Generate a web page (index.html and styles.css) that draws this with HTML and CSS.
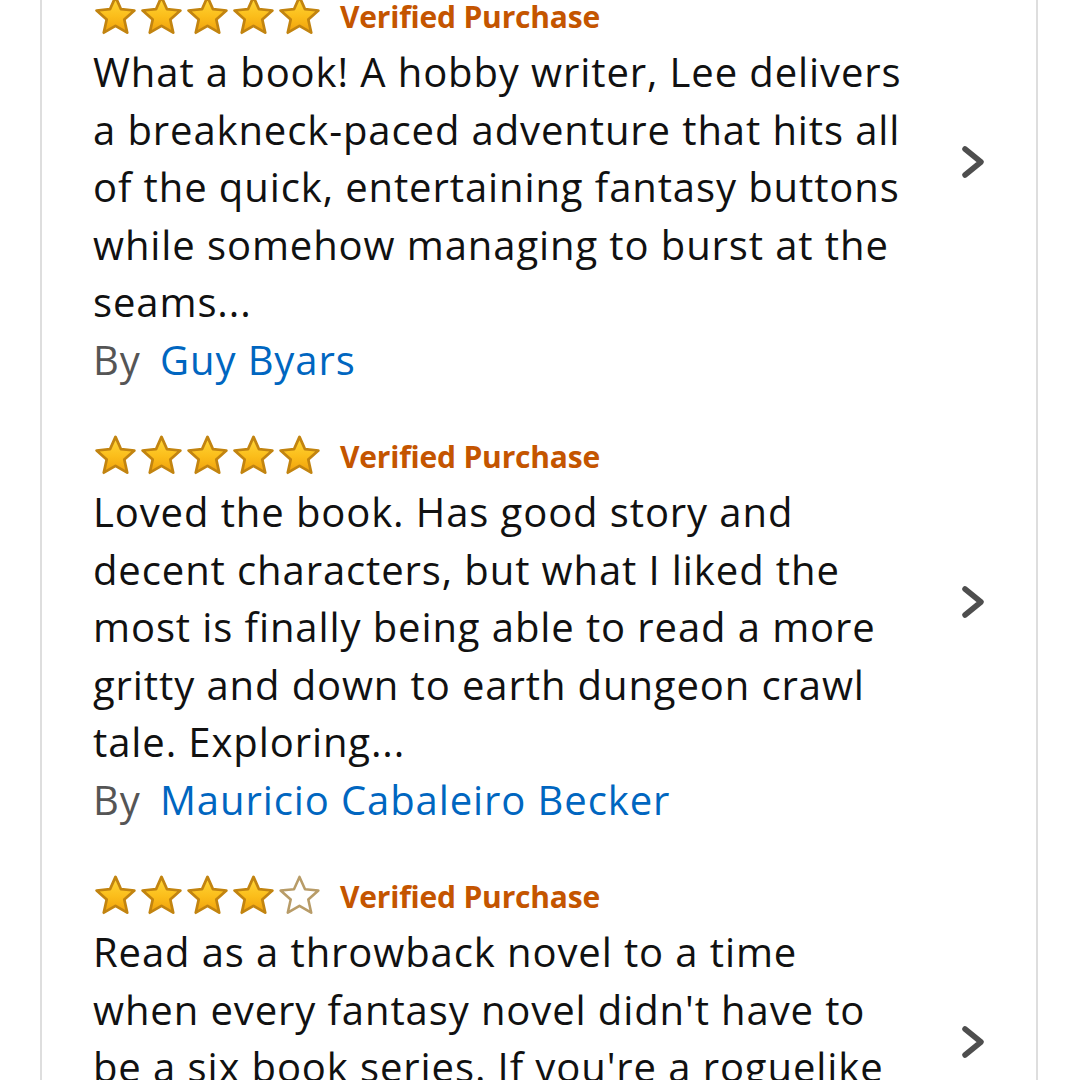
FILE: index.html
```html
<!DOCTYPE html>
<html lang="en">
<head>
<meta charset="utf-8">
<title>Reviews</title>
<link rel="stylesheet" href="styles.css">
</head>
<body>
<svg width="0" height="0" class="defs" aria-hidden="true">
  <defs>
    <linearGradient id="gold" x1="0" y1="0" x2="0" y2="1">
      <stop offset="0" stop-color="#ffd83a"/>
      <stop offset="0.55" stop-color="#fbbd1a"/>
      <stop offset="1" stop-color="#f0a10c"/>
    </linearGradient>
    <symbol id="star-full" viewBox="0 0 24 24">
      <polygon points="12,1.6 15,8.3 22.3,9 16.8,13.9 18.4,21.1 12,17.4 5.6,21.1 7.2,13.9 1.7,9 9,8.3" fill="url(#gold)" stroke="#c28410" stroke-width="1.5" stroke-linejoin="round"/>
    </symbol>
    <symbol id="star-empty" viewBox="0 0 24 24">
      <polygon points="12,1.6 15,8.3 22.3,9 16.8,13.9 18.4,21.1 12,17.4 5.6,21.1 7.2,13.9 1.7,9 9,8.3" fill="#fff" stroke="#b89c68" stroke-width="1.4" stroke-linejoin="round"/>
    </symbol>
    <symbol id="chev" viewBox="0 0 26 36">
      <polyline points="5,5 21,18 5,31" fill="none" stroke="#4e4e4e" stroke-width="5.5" stroke-linecap="round" stroke-linejoin="round"/>
    </symbol>
  </defs>
</svg>

<div class="card">
  <div class="review">
    <div class="review-main">
      <div class="review-body">
        <div class="rating">
          <span class="stars">
            <svg class="star"><use href="#star-full"/></svg><svg class="star"><use href="#star-full"/></svg><svg class="star"><use href="#star-full"/></svg><svg class="star"><use href="#star-full"/></svg><svg class="star"><use href="#star-full"/></svg>
          </span>
          <span class="verified">Verified Purchase</span>
        </div>
        <p class="text">What a book! A hobby writer, Lee delivers<br>a breakneck-paced adventure that hits all<br>of the quick, entertaining fantasy buttons<br>while somehow managing to burst at the<br>seams...</p>
      </div>
      <svg class="chevron"><use href="#chev"/></svg>
    </div>
    <div class="byline">By <a class="author" href="#">Guy Byars</a></div>
  </div>

  <div class="review">
    <div class="review-main">
      <div class="review-body">
        <div class="rating">
          <span class="stars">
            <svg class="star"><use href="#star-full"/></svg><svg class="star"><use href="#star-full"/></svg><svg class="star"><use href="#star-full"/></svg><svg class="star"><use href="#star-full"/></svg><svg class="star"><use href="#star-full"/></svg>
          </span>
          <span class="verified">Verified Purchase</span>
        </div>
        <p class="text">Loved the book. Has good story and<br>decent characters, but what I liked the<br>most is finally being able to read a more<br>gritty and down to earth dungeon crawl<br>tale. Exploring...</p>
      </div>
      <svg class="chevron"><use href="#chev"/></svg>
    </div>
    <div class="byline">By <a class="author" href="#">Mauricio Cabaleiro Becker</a></div>
  </div>

  <div class="review">
    <div class="review-main">
      <div class="review-body">
        <div class="rating">
          <span class="stars">
            <svg class="star"><use href="#star-full"/></svg><svg class="star"><use href="#star-full"/></svg><svg class="star"><use href="#star-full"/></svg><svg class="star"><use href="#star-full"/></svg><svg class="star"><use href="#star-empty"/></svg>
          </span>
          <span class="verified">Verified Purchase</span>
        </div>
        <p class="text">Read as a throwback novel to a time<br>when every fantasy novel didn't have to<br>be a six book series. If you're a roguelike<br>fan, this book is a quick and fun read<br>that...</p>
      </div>
      <svg class="chevron"><use href="#chev"/></svg>
    </div>
    <div class="byline">By <a class="author" href="#">Reader</a></div>
  </div>
</div>
</body>
</html>
```

FILE: styles.css
```css
html, body {
  margin: 0;
  padding: 0;
  background: #ffffff;
  overflow: hidden;
}

body {
  font-family: "Open Sans", "Noto Sans", sans-serif;
  color: #111111;
}

.defs {
  position: absolute;
  width: 0;
  height: 0;
}

.card {
  margin: -28px 42px 0 40px;
  border-left: 2px solid #dedede;
  border-right: 2px solid #dedede;
  background: #ffffff;
}

.review {
  padding: 22px 0 24px 51px;
}

.review-main {
  display: flex;
  align-items: center;
}

.review-body {
  flex: 1;
  min-width: 0;
}

.rating {
  display: flex;
  align-items: center;
  height: 44px;
  margin-bottom: 5px;
}

.stars {
  display: flex;
  gap: 1px;
}

.star {
  width: 45px;
  height: 44px;
  display: block;
}

.verified {
  margin-left: 18px;
  color: #c45500;
  font-weight: 700;
  font-size: 30px;
  letter-spacing: -0.2px;
}

.text {
  margin: 0;
  font-size: 40px;
  line-height: 57.5px;
  letter-spacing: 0.9px;
  white-space: nowrap;
  color: #111111;
}

.chevron {
  width: 26px;
  height: 36px;
  flex: none;
  margin: 0 50px 0 20px;
}

.byline {
  font-size: 40px;
  line-height: 57.5px;
  letter-spacing: 0.9px;
  color: #555555;
}

.author {
  margin-left: 8px;
  color: #0066c0;
  text-decoration: none;
}
```
